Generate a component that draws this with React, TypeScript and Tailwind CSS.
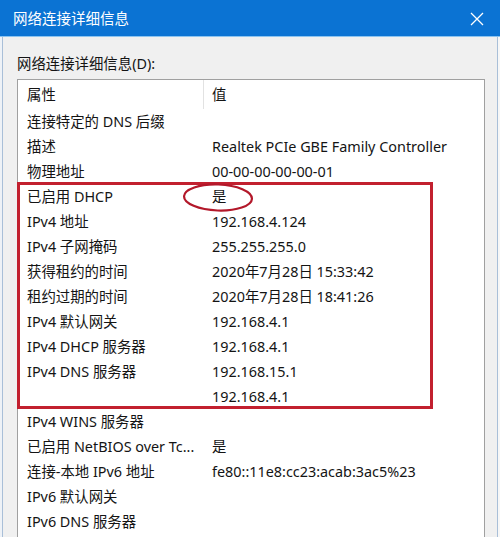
import React from "react";

type Row = {
  name: string;
  value: string;
};

const rows: Row[] = [
  { name: "连接特定的 DNS 后缀", value: "" },
  { name: "描述", value: "Realtek PCIe GBE Family Controller" },
  { name: "物理地址", value: "00-00-00-00-00-01" },
  { name: "已启用 DHCP", value: "是" },
  { name: "IPv4 地址", value: "192.168.4.124" },
  { name: "IPv4 子网掩码", value: "255.255.255.0" },
  { name: "获得租约的时间", value: "2020年7月28日 15:33:42" },
  { name: "租约过期的时间", value: "2020年7月28日 18:41:26" },
  { name: "IPv4 默认网关", value: "192.168.4.1" },
  { name: "IPv4 DHCP 服务器", value: "192.168.4.1" },
  { name: "IPv4 DNS 服务器", value: "192.168.15.1" },
  { name: "", value: "192.168.4.1" },
  { name: "IPv4 WINS 服务器", value: "" },
  { name: "已启用 NetBIOS over Tc...", value: "是" },
  { name: "连接-本地 IPv6 地址", value: "fe80::11e8:cc23:acab:3ac5%23" },
  { name: "IPv6 默认网关", value: "" },
  { name: "IPv6 DNS 服务器", value: "" },
];

const font = {
  fontFamily: '"Noto Sans", "Noto Sans CJK SC", sans-serif',
};

const App = () => {
  return (
    <div
      className="relative w-[500px] h-[537px] overflow-hidden bg-white text-[14.4px] text-[#141414]"
      style={font}
    >
      {/* title bar */}
      <div className="flex items-center justify-between h-[37px] bg-[#0b73d3] border-b border-[#8cc4f0] pl-[13px] pr-[13px] text-white">
        <span className="text-[14.5px] leading-none">网络连接详细信息</span>
        <svg width="16" height="16" viewBox="0 0 16 16" className="mt-[1px] mr-[2px]">
          <path d="M2 2 L14 14 M14 2 L2 14" stroke="#ffffff" strokeWidth="1.3" fill="none" />
        </svg>
      </div>

      <div className="flex h-[500px]">
        <div className="w-[2px] bg-[#eef2f7]" />
        <div className="flex-1 bg-[#f0f0f0] border-l border-r border-[#a9bfd8] pl-[14px] pr-[12px]">
          <div className="h-[42px] flex items-end pb-[8px]">
            <span className="leading-none">网络连接详细信息(D):</span>
          </div>
          <div className="bg-white border border-[#a0a0a0] h-[470px] overflow-hidden">
            <div className="flex h-[29px] items-center">
              <div className="w-[186px] pl-[9px] border-r border-[#e2e2e2] h-full flex items-center">
                属性
              </div>
              <div className="pl-[8px]">值</div>
            </div>
            {rows.map((row, i) => (
              <div key={i} className="flex h-[25px] items-center whitespace-nowrap">
                <div className="w-[186px] pl-[9px]">{row.name}</div>
                <div className="pl-[8px]">{row.value}</div>
              </div>
            ))}
          </div>
        </div>
        <div className="w-[2px] bg-[#f7f7f7]" />
      </div>

      {/* annotation box */}
      <div className="absolute left-[17px] top-[182px] w-[416px] h-[227px] border-[3px] border-[#c2202f]" />
      <svg
        className="absolute left-[180px] top-[181px]"
        width="78"
        height="34"
        viewBox="0 0 78 34"
      >
        <ellipse
          cx="38"
          cy="16.5"
          rx="34"
          ry="13"
          transform="rotate(2 38 16.5)"
          stroke="#b3182a"
          strokeWidth="2.2"
          fill="none"
        />
      </svg>
    </div>
  );
};

export default App;
